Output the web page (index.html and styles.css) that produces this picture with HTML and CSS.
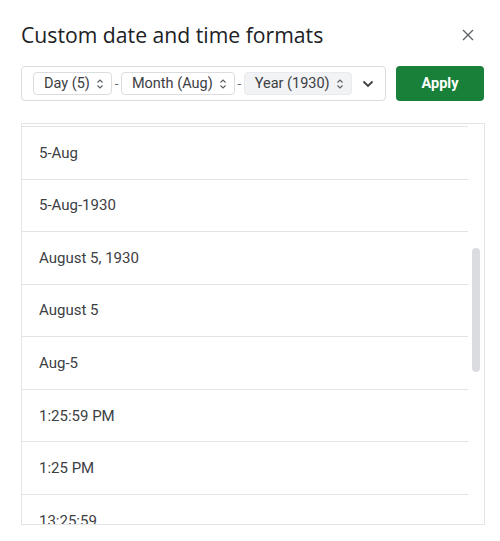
FILE: index.html
```html
<!DOCTYPE html>
<html>
<head>
<meta charset="utf-8">
<link rel="stylesheet" href="styles.css">
</head>
<body>
<div class="dialog">
  <div class="header">
    <h1 class="title">Custom date and time formats</h1>
    <button class="close" aria-label="Close">
      <svg width="12" height="12" viewBox="0 0 12 12"><path d="M1 1 L11 11 M11 1 L1 11" stroke="#5f6368" stroke-width="1.4" fill="none"/></svg>
    </button>
  </div>
  <div class="toolbar">
    <div class="input">
      <span class="chip">Day (5)<svg class="updown" width="8" height="12" viewBox="0 0 8 12"><path d="M1.5 4.5 L4 2 L6.5 4.5 M1.5 7.5 L4 10 L6.5 7.5" stroke="#5f6368" stroke-width="1.2" fill="none"/></svg></span>
      <span class="sep">-</span>
      <span class="chip">Month (Aug)<svg class="updown" width="8" height="12" viewBox="0 0 8 12"><path d="M1.5 4.5 L4 2 L6.5 4.5 M1.5 7.5 L4 10 L6.5 7.5" stroke="#5f6368" stroke-width="1.2" fill="none"/></svg></span>
      <span class="sep">-</span>
      <span class="chip active">Year (1930)<svg class="updown" width="8" height="12" viewBox="0 0 8 12"><path d="M1.5 4.5 L4 2 L6.5 4.5 M1.5 7.5 L4 10 L6.5 7.5" stroke="#5f6368" stroke-width="1.2" fill="none"/></svg></span>
      <svg class="chev" width="12" height="8" viewBox="0 0 12 8"><path d="M1.5 1.5 L6 6 L10.5 1.5" stroke="#3c4043" stroke-width="1.8" fill="none"/></svg>
    </div>
    <button class="apply">Apply</button>
  </div>
  <div class="list">
    <div class="rows">
      <div class="row-top"></div>
      <div class="row">5-Aug</div>
      <div class="row">5-Aug-1930</div>
      <div class="row">August 5, 1930</div>
      <div class="row">August 5</div>
      <div class="row">Aug-5</div>
      <div class="row">1:25:59 PM</div>
      <div class="row">1:25 PM</div>
      <div class="row">13:25:59</div>
    </div>
    <div class="scrollbar"></div>
  </div>
</div>
</body>
</html>
```
FILE: styles.css
```css
html, body {
  margin: 0;
  padding: 0;
  background: #ffffff;
}
body {
  font-family: Roboto, "Liberation Sans", sans-serif;
  color: #3c4043;
}
.dialog {
  width: 500px;
  padding: 20px 15px 0 21px;
  box-sizing: border-box;
}
.header {
  display: flex;
  align-items: center;
  justify-content: space-between;
  height: 30px;
}
.title {
  margin: 0;
  font-family: "Open Sans", Roboto, sans-serif;
  font-weight: 400;
  font-size: 21.2px;
  line-height: 30px;
  color: #202124;
}
.close {
  border: 0;
  background: none;
  padding: 0;
  width: 24px;
  height: 24px;
  display: flex;
  align-items: center;
  justify-content: center;
  margin-right: 5px;
}
.toolbar {
  display: flex;
  gap: 10px;
  margin-top: 16px;
  height: 35px;
}
.input {
  box-sizing: border-box;
  width: 365px;
  height: 35px;
  border: 1px solid #dadce0;
  border-radius: 4px;
  display: flex;
  align-items: center;
  padding-left: 11px;
}
.chip {
  box-sizing: border-box;
  height: 23px;
  border: 1px solid #dadce0;
  border-radius: 4px;
  display: flex;
  align-items: center;
  gap: 6px;
  padding: 0 7px 0 10px;
  font-size: 14.5px;
  color: #3c4043;
}
.chip.active {
  background: #f1f3f4;
  border-color: #e8eaed;
}
.sep {
  width: 9px;
  text-align: center;
  font-size: 13px;
  color: #5f6368;
}
.chev {
  margin-left: 10px;
}
.apply {
  box-sizing: border-box;
  width: 88px;
  height: 35px;
  border: 0;
  border-radius: 4px;
  background: #188038;
  color: #ffffff;
  font-family: Roboto, sans-serif;
  font-weight: 700;
  font-size: 14.5px;
  padding: 0;
}
.list {
  position: relative;
  box-sizing: border-box;
  margin-top: 22px;
  width: 464px;
  height: 402px;
  border: 1px solid #e3e4e6;
  overflow: hidden;
}
.rows {
  margin-right: 16px;
}
.row-top {
  height: 3px;
  box-sizing: border-box;
  border-bottom: 1px solid #e3e4e6;
}
.row {
  box-sizing: border-box;
  height: 52.57px;
  border-bottom: 1px solid #e3e4e6;
  display: flex;
  align-items: center;
  padding-left: 17px;
  font-size: 15px;
  color: #3c4043;
}
.scrollbar {
  position: absolute;
  left: 450px;
  top: 124px;
  width: 8px;
  height: 124px;
  border-radius: 4px;
  background: #dadce0;
}
```
